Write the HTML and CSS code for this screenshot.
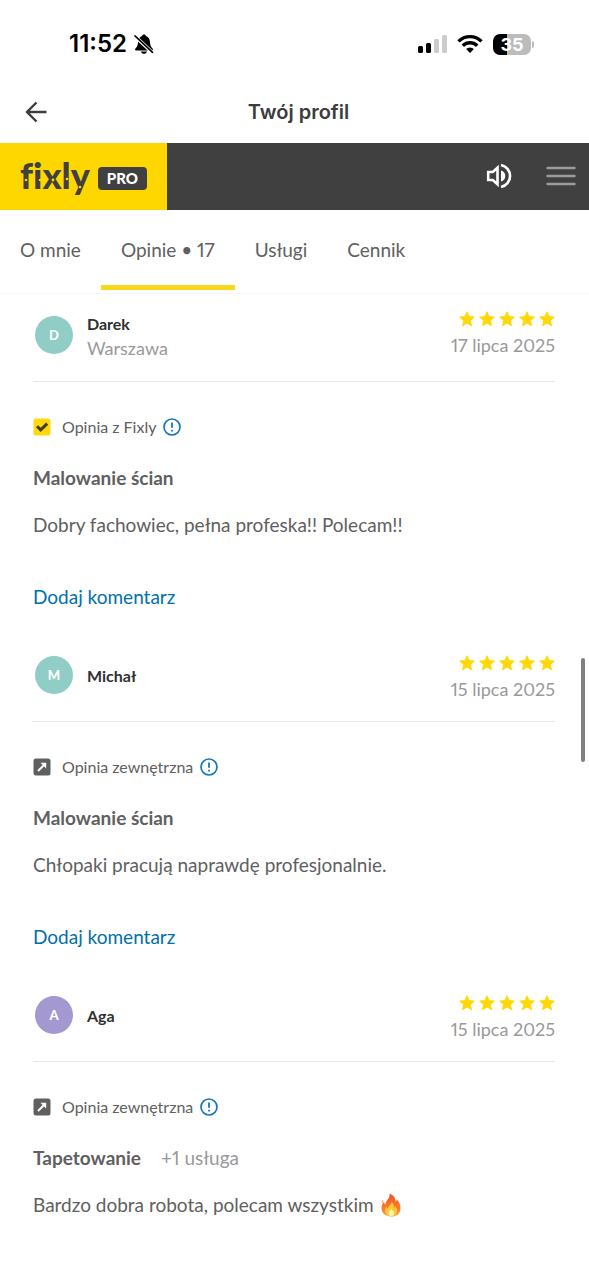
FILE: index.html
```html
<!DOCTYPE html>
<html lang="pl">
<head>
<meta charset="utf-8">
<meta name="viewport" content="width=device-width, initial-scale=1">
<title>Twój profil</title>
<link rel="stylesheet" href="styles.css">
</head>
<body>
<svg class="defs" aria-hidden="true">
  <symbol id="stars" viewBox="0 0 96 16">
    <g fill="#ffd80a" stroke="#ffd80a" stroke-width="1" stroke-linejoin="round">
      <path id="star" d="M8 .8l2.1 4.800 5.200.5-3.900 3.500 1.100 5.100L8 12.100l-4.500 2.600 1.100-5.100L.7 6.100l5.200-.5z"/>
      <use href="#star" x="20"/><use href="#star" x="40"/><use href="#star" x="60"/><use href="#star" x="80"/>
    </g>
  </symbol>
  <symbol id="info" viewBox="0 0 18 18">
    <circle cx="9" cy="9" r="8" fill="none" stroke="#1479b8" stroke-width="1.7"/>
    <path d="M9 4.5v5.300M9 11.800v1.800" stroke="#1479b8" stroke-width="1.8"/>
  </symbol>
  <symbol id="external" viewBox="0 0 18 18">
    <rect width="17" height="17" x=".5" y=".5" rx="2.5" fill="#606060"/>
    <path d="M5 13L11 7" stroke="#fff" stroke-width="2"/>
    <path d="M7.500 4.800h5.700v5.700z" fill="#fff"/>
  </symbol>
  <symbol id="verified" viewBox="0 0 18 18">
    <rect width="17" height="17" x=".5" y=".5" rx="2.5" fill="#ffd90a"/>
    <path d="M4 8.200l3.700 3.700 6.500-6.200" fill="none" stroke="#403d25" stroke-width="3"/>
  </symbol>
</svg>

<div class="status">
  <div class="clock">
    <span>11:52</span>
    <svg width="20" height="20" viewBox="0 0 20 20" aria-hidden="true">
      <path d="M10 .5c1 0 1.800.6 2 1.500 2.600.9 3.700 3 3.900 5.500.2 3.700.9 5.300 2.800 7.300.6.900.1 1.600-.9 1.600H2.200c-1 0-1.500-.700-.9-1.600 1.900-2 2.600-3.600 2.800-7.300C4.300 5 5.400 2.900 8 2c.2-.9 1-1.500 2-1.500zM7 17.400h6c-.4 1.500-1.500 2.300-3 2.300s-2.600-.8-3-2.300z"/>
      <path d="M1 2.200l17 16" stroke="#fff" stroke-width="3.600"/>
      <path d="M1 1.800l17.500 16.500" stroke="#000" stroke-width="1.600" stroke-linecap="round"/>
    </svg>
  </div>
  <div class="indicators">
    <svg width="30" height="20" viewBox="0 0 30 20" aria-hidden="true">
      <rect x="1" y="12" width="5" height="7" rx="1.500"/>
      <rect x="9" y="9" width="5" height="10" rx="1.500"/>
      <rect x="17" y="5" width="5" height="14" rx="1.500" fill="#ccc"/>
      <rect x="25" y="1" width="5" height="18" rx="1.500" fill="#ccc"/>
    </svg>
    <svg width="26" height="20" viewBox="0 0 26 20" aria-hidden="true">
      <g fill="none" stroke="#000" stroke-width="3.400">
        <path d="M1.500 7.400a16.300 16.300 0 0 1 23 0"/>
        <path d="M5.800 11.800a10.200 10.200 0 0 1 14.400 0"/>
      </g>
      <path d="M13 19l-3.900-4a5.500 5.500 0 0 1 7.800 0z"/>
    </svg>
    <div class="battery"><span>35</span></div>
  </div>
</div>

<header class="appbar">
  <button class="back" aria-label="Wstecz">
    <svg width="22" height="22" viewBox="0 0 22 22" aria-hidden="true"><path d="M11.500 1.500L2 11l9.500 9.500M2 11h19.500" fill="none" stroke="#3c3c3c" stroke-width="2.400"/></svg>
  </button>
  <h1>Twój profil</h1>
</header>

<div class="brandbar">
  <a class="brand" href="#">
    <span class="wordmark">fixly
      <svg class="rivets" width="70" height="34" viewBox="0 0 70 34" aria-hidden="true">
        <g fill="#ffd700"><circle cx="6" cy="18" r="1.300"/><circle cx="20" cy="18" r="1.300"/><circle cx="33" cy="18" r="1.400"/><circle cx="47" cy="17" r="1.300"/><circle cx="60" cy="25" r="1.300"/></g>
      </svg>
    </span>
    <span class="pro">PRO</span>
  </a>
  <div class="tools">
    <button aria-label="Dźwięk">
      <svg width="26" height="26" viewBox="0 0 26 26" aria-hidden="true">
        <path d="M2.200 9h4.600l4.700-4.300v16.600L6.800 17H2.200z" fill="none" stroke="#fff" stroke-width="2.600"/>
        <path d="M15 2a11.200 11.200 0 0 1 0 22" fill="none" stroke="#fff" stroke-width="2.600"/>
        <path d="M15 7.500a5.700 5.700 0 0 1 0 11z" fill="#fff"/>
      </svg>
    </button>
    <button aria-label="Menu">
      <svg width="30" height="20" viewBox="0 0 30 20" aria-hidden="true"><path d="M1.500 2h27M1.500 10h27M1.500 18h27" stroke="#9b9b9b" stroke-width="2.400" stroke-linecap="round"/></svg>
    </button>
  </div>
</div>

<nav class="tabs">
  <a href="#">O mnie</a>
  <a href="#" class="active" aria-current="page">Opinie • 17</a>
  <a href="#">Usługi</a>
  <a href="#">Cennik</a>
</nav>

<main class="reviews">
  <article class="review">
    <div class="head">
      <span class="avatar">D</span>
      <div class="person"><h2>Darek</h2><p>Warszawa</p></div>
      <div class="rating"><svg width="96" height="16" role="img" aria-label="5 gwiazdek"><use href="#stars"/></svg><time>17 lipca 2025</time></div>
    </div>
    <div class="source"><svg class="kind" width="18" height="18" aria-hidden="true"><use href="#verified"/></svg><span>Opinia z Fixly</span><button aria-label="Informacja"><svg width="18" height="18"><use href="#info"/></svg></button></div>
    <div class="service"><h3>Malowanie ścian</h3></div>
    <p class="text">Dobry fachowiec, pełna profeska!! Polecam!!</p>
    <a class="reply" href="#">Dodaj komentarz</a>
  </article>

  <article class="review">
    <div class="head compact">
      <span class="avatar">M</span>
      <div class="person"><h2>Michał</h2></div>
      <div class="rating"><svg width="96" height="16" role="img" aria-label="5 gwiazdek"><use href="#stars"/></svg><time>15 lipca 2025</time></div>
    </div>
    <div class="source"><svg class="kind" width="18" height="18" aria-hidden="true"><use href="#external"/></svg><span>Opinia zewnętrzna</span><button aria-label="Informacja"><svg width="18" height="18"><use href="#info"/></svg></button></div>
    <div class="service"><h3>Malowanie ścian</h3></div>
    <p class="text">Chłopaki pracują naprawdę profesjonalnie.</p>
    <a class="reply" href="#">Dodaj komentarz</a>
  </article>

  <article class="review">
    <div class="head compact">
      <span class="avatar violet">A</span>
      <div class="person"><h2>Aga</h2></div>
      <div class="rating"><svg width="96" height="16" role="img" aria-label="5 gwiazdek"><use href="#stars"/></svg><time>15 lipca 2025</time></div>
    </div>
    <div class="source"><svg class="kind" width="18" height="18" aria-hidden="true"><use href="#external"/></svg><span>Opinia zewnętrzna</span><button aria-label="Informacja"><svg width="18" height="18"><use href="#info"/></svg></button></div>
    <div class="service"><h3>Tapetowanie</h3><span>+1 usługa</span></div>
    <p class="text">Bardzo dobra robota, polecam wszystkim
      <svg class="fire" width="20" height="24" viewBox="0 0 20 24" role="img" aria-label="ogień">
        <defs><linearGradient id="flame" x1="0" y1="0" x2="0" y2="1"><stop offset="0" stop-color="#f0532d"/><stop offset=".6" stop-color="#f97a28"/><stop offset="1" stop-color="#f9a13a"/></linearGradient></defs>
        <path d="M8.500.5c5 2.300 6.300 5.200 6.100 8.300.8-.5 1.100-1.400 1.100-2.500 2.500 2.600 3.800 5.500 3.800 8.900 0 5.300-4 8.300-9.300 8.300C4.700 23.500.700 20.600.500 15.600c-.1-3.200 1.200-5.400 2.500-7.100.1 1.500.6 2.500 1.600 3.100C4.300 7.500 9.300 5.700 8.500.5zM2.800 6.800C1.200 8.600 1.400 9.500 1 10.300.300 9.300.900 7.600 2.800 6.800z" fill="url(#flame)"/>
        <path d="M10.600 9c2.600 2.200 2.100 4.600 2.300 5.900.8-.3 1.100-.9 1.300-1.800 1.400 1.500 2 3.100 1.900 4.800-.2 3.300-2.700 5.200-5.900 5.200-3.400 0-6-1.900-6.100-5.100-.1-2 .6-3.300 1.500-4.400.2 1 .7 1.600 1.400 1.800C6.800 12.700 10.600 11.700 10.600 9z" fill="#ffc93c"/>
        <path d="M10.300 15.500c.5 2 2.700 2.700 2.700 4.900 0 1.600-1.200 2.600-2.800 2.600s-2.900-1-2.900-2.600c0-2.100 2.500-2.700 3-4.900z" fill="#fff0a5"/>
      </svg>
    </p>
  </article>
</main>
<div class="scrollbar"></div>
</body>
</html>
```

FILE: styles.css
```css
* { box-sizing: border-box; }

body {
  margin: 0;
  min-height: 100vh;
  position: relative;
  background: #fff;
  color: #606060;
  font-family: Lato, "Noto Sans", sans-serif;
  font-size: 19px;
  line-height: 26px;
  font-variant-numeric: proportional-nums;
}

h1, h2, h3, p { margin: 0; }
a { color: inherit; text-decoration: none; }
button { display: flex; padding: 0; border: 0; background: none; cursor: pointer; }
svg { display: block; flex: none; }
.defs { position: absolute; width: 0; height: 0; }

.status {
  display: flex;
  justify-content: space-between;
  align-items: center;
  padding: 28px 55px 22px 69px;
  color: #000;
  font-family: Inter, sans-serif;
}
.clock { display: flex; align-items: center; gap: 7px; font-size: 24px; line-height: 32px; font-weight: 600; }
.indicators { display: flex; align-items: center; gap: 10px; }
.battery {
  position: relative;
  width: 38px;
  height: 21px;
  margin-right: 3px;
  border-radius: 7px;
  background: linear-gradient(90deg, #000 36%, #bcbcbc 36%);
  color: #fff;
  font-size: 18px;
  line-height: 21px;
  font-weight: 700;
  text-align: center;
}
.battery::after {
  content: "";
  position: absolute;
  right: -3px;
  top: 7px;
  width: 2px;
  height: 7px;
  border-radius: 0 2px 2px 0;
  background: #bcbcbc;
}

.appbar {
  display: grid;
  grid-template-columns: 48px 1fr 40px;
  align-items: center;
  height: 61px;
  padding-bottom: 2px;
}
.back { padding-left: 25px; }
.appbar h1 {
  color: #3c3c3c;
  font-family: Inter, sans-serif;
  font-size: 20px;
  line-height: 28px;
  font-weight: 600;
  text-align: center;
}

.brandbar { display: flex; justify-content: space-between; height: 67px; background: #404040; }
.brand { display: flex; align-items: center; gap: 8px; padding: 0 20px; background: #ffd700; color: #404040; }
.wordmark { position: relative; font-size: 36px; line-height: 44px; font-weight: 900; padding-bottom: 4px; font-variant-ligatures: none; }
.rivets { position: absolute; left: 0; top: 9px; }
.pro {
  margin-top: 4px;
  padding: 0 9px;
  border-radius: 4px;
  background: #404040;
  color: #fff;
  font-size: 15px;
  line-height: 23px;
  font-weight: 900;
}
.tools { display: flex; align-items: center; gap: 34px; padding: 0 13px 2px 0; }

.tabs { display: flex; height: 84px; padding-bottom: 3px; border-bottom: 1px solid #f7f7f7; }
.tabs a { padding: 27px 20px 22px; border-bottom: 5px solid transparent; }
.tabs .active { border-color: #f8d71c; }

.reviews { padding: 16px 34px 48px 33px; }
.review + .review { margin-top: 40px; }
.head {
  display: flex;
  align-items: flex-start;
  height: 72px;
  border-bottom: 1px solid #e6e6e6;
}
.avatar {
  width: 38px;
  height: 38px;
  margin: 6px 14px 0 2px;
  border-radius: 50%;
  background: #8fcdc6;
  color: #fff;
  font-size: 13px;
  line-height: 38px;
  font-weight: 900;
  text-align: center;
}
.violet { background: #a398d0; }
.person { display: flex; flex-direction: column; justify-content: center; flex: 1; height: 52px; }
.compact .person { height: 50px; }
.person h2 { color: #303030; font-size: 16px; line-height: 25px; font-weight: 700; }
.person p { color: #999; font-size: 18px; line-height: 25px; }
.rating { display: flex; flex-direction: column; align-items: flex-end; gap: 5px; padding-top: 1px; }
.compact .rating { padding-top: 5px; }
.rating time { color: #999; font-size: 18px; }

.source { display: flex; align-items: center; margin-top: 34px; font-size: 16px; line-height: 22px; }
.source .kind { margin-right: 11px; }
.source button { margin-left: 7px; }
.service { display: flex; gap: 20px; margin-top: 27px; }
.service h3 { font-size: 19px; font-weight: 700; }
.service span { color: #999; }
.text { display: flex; align-items: center; gap: 7px; margin-top: 21px; }
.reply { display: block; width: fit-content; margin-top: 46px; color: #0070a8; }

.scrollbar {
  position: absolute;
  right: 4px;
  top: 658px;
  width: 4px;
  height: 104px;
  border-radius: 2px;
  background: #808080;
}
```
